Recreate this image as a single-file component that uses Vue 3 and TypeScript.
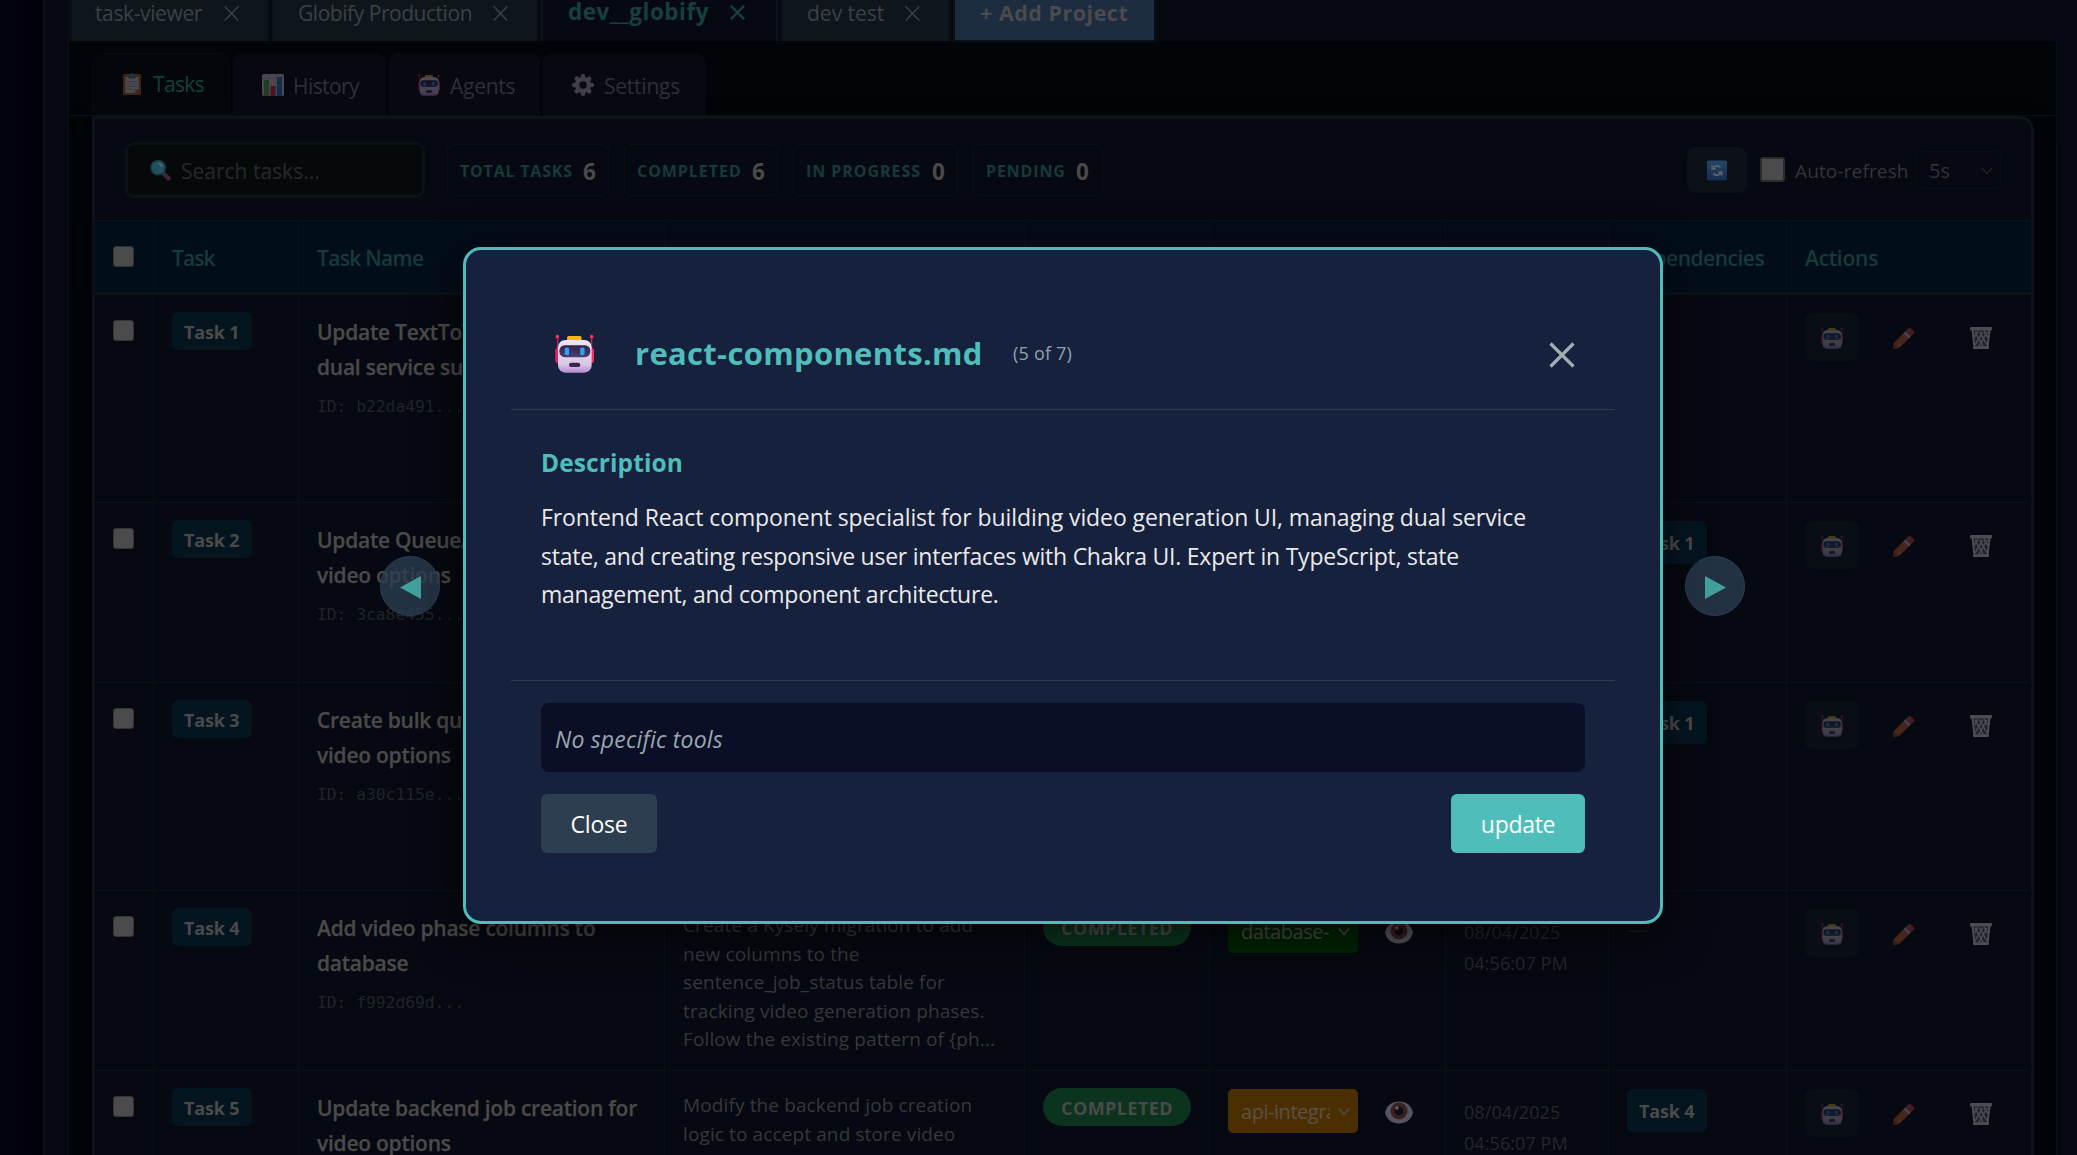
<script setup lang="ts">
interface ProjectTab { name: string; cls: string }
interface SubTab { name: string; icon: string; cls: string }
interface Stat { label: string; value: number; cls: string }
interface Task {
  id: number
  title: string[]
  uid: string
  size: string
  details?: string[]
  status?: string
  agent?: string
  agentCls?: string
  date?: string[]
  dep?: string
}

const projects: ProjectTab[] = [
  { name: 'task-viewer', cls: 'p1' },
  { name: 'Globify Production', cls: 'p2' },
  { name: 'dev__globify', cls: 'p3 active' },
  { name: 'dev test', cls: 'p4' },
]

const subTabs: SubTab[] = [
  { name: 'Tasks', icon: 'i-clipboard', cls: 's1 active' },
  { name: 'History', icon: 'i-chart', cls: 's2' },
  { name: 'Agents', icon: 'i-robot', cls: 's3' },
  { name: 'Settings', icon: 'i-gear', cls: 's4' },
]

const stats: Stat[] = [
  { label: 'TOTAL TASKS', value: 6, cls: 'w1' },
  { label: 'COMPLETED', value: 6, cls: 'w2' },
  { label: 'IN PROGRESS', value: 0, cls: 'w3' },
  { label: 'PENDING', value: 0, cls: 'w4' },
]

const tasks: Task[] = [
  { id: 1, title: ['Update TextToVideo', 'dual service support'], uid: 'b22da491', size: 'tall' },
  { id: 2, title: ['Update QueueAll', 'video options'], uid: '3ca8e455', size: 'short', dep: 'Task 1' },
  { id: 3, title: ['Create bulk queue', 'video options'], uid: 'a30c115e', size: 'tall', dep: 'Task 1' },
  {
    id: 4,
    title: ['Add video phase columns to', 'database'],
    uid: 'f992d69d',
    size: 'short',
    details: ['Create a Kysely migration to add', 'new columns to the', 'sentence_job_status table for', 'tracking video generation phases.', 'Follow the existing pattern of {ph...'],
    status: 'COMPLETED',
    agent: 'database-',
    agentCls: 'green',
    date: ['08/04/2025', '04:56:07 PM'],
    dep: '—',
  },
  {
    id: 5,
    title: ['Update backend job creation for', 'video options'],
    uid: '7be0c2d1',
    size: 'tall',
    details: ['Modify the backend job creation', 'logic to accept and store video'],
    status: 'COMPLETED',
    agent: 'api-integration',
    agentCls: 'amber',
    date: ['08/04/2025', '04:56:07 PM'],
    dep: 'Task 4',
  },
]
</script>

<template>
  <div class="app">
    <svg class="defs" width="0" height="0" aria-hidden="true">
      <defs>
        <linearGradient id="head" x1="0" y1="0" x2="0" y2="1">
          <stop offset="0" stop-color="#efe8f2" /><stop offset=".75" stop-color="#d8c6e4" /><stop offset="1" stop-color="#b58ad6" />
        </linearGradient>
        <linearGradient id="visor" x1="0" y1="0" x2="0" y2="1">
          <stop offset="0" stop-color="#35204a" /><stop offset="1" stop-color="#4a3f72" />
        </linearGradient>
        <linearGradient id="blue" x1="0" y1="0" x2="0" y2="1">
          <stop offset="0" stop-color="#4fa8f5" /><stop offset="1" stop-color="#2b62b8" />
        </linearGradient>
      </defs>
      <symbol id="i-robot" viewBox="75 74 116 118" preserveAspectRatio="none">
        <path d="M83 84V122M184 84V122" stroke="#e0285a" stroke-width="3.5" />
        <circle cx="82" cy="82" r="5.5" fill="#f8315f" /><circle cx="184" cy="82" r="5.5" fill="#f8315f" />
        <rect x="76" y="117" width="14" height="45" rx="6" fill="#e8245c" /><rect x="177" y="117" width="14" height="45" rx="6" fill="#f8315f" />
        <rect x="111" y="80" width="43" height="18" rx="5" fill="#fbb41c" />
        <rect x="84" y="92" width="100" height="99" rx="22" fill="url(#head)" />
        <rect x="88" y="108" width="92" height="36" rx="16" fill="url(#visor)" />
        <rect x="104" y="115" width="13" height="23" rx="5" fill="#2aa3f0" /><rect x="150" y="115" width="13" height="23" rx="5" fill="#2aa3f0" />
        <rect x="117" y="161" width="33" height="13" rx="5.5" fill="#3b2450" />
      </symbol>
      <symbol id="i-clipboard" viewBox="0 0 18 22">
        <rect x="0" y="1" width="18" height="21" rx="1.5" fill="#c9713a" />
        <path d="M2.5 4h13v12l-4 4h-9z" fill="#f1ecf4" /><path d="M15.500 16h-4v4z" fill="#b9a9c9" />
        <rect x="5" y="1.500" width="8" height="4" rx="1" fill="#8a7d94" /><circle cx="9" cy="1.500" r="1.500" fill="#8a7d94" />
        <path d="M4.500 8.500h9M4.500 11h9M4.500 13.500h9M4.500 16h5" stroke="#b5a8bd" stroke-width="1" />
      </symbol>
      <symbol id="i-chart" viewBox="0 0 22 22">
        <rect width="22" height="22" rx="2" fill="#e4dde8" /><path d="M0 4h22M7 0v22M14 0v22" stroke="#c2b8ca" stroke-width=".7" />
        <rect x="2" y="6" width="5" height="16" fill="#5fb84a" /><rect x="8.500" y="12" width="5" height="10" fill="#e8315c" /><rect x="15" y="3" width="5" height="19" fill="#2f87d8" />
      </symbol>
      <symbol id="i-gear" viewBox="0 0 22 22">
        <g fill="#c4bbcb">
          <rect v-for="a in 8" :key="a" x="8.800" y="0" width="4.400" height="7" rx="2" :transform="`rotate(${a * 45} 11 11)`" />
        </g>
        <circle cx="11" cy="11" r="6" fill="none" stroke="#c4bbcb" stroke-width="4" />
        <circle cx="11" cy="11" r="4" fill="none" stroke="#83798c" stroke-width="1" />
      </symbol>
      <symbol id="i-search" viewBox="0 0 22 22">
        <path d="M14.500 15l5 5" stroke="#7d4a78" stroke-width="4.500" stroke-linecap="round" />
        <circle cx="8.500" cy="8.500" r="7.500" fill="#43a8bd" stroke="#2f7189" stroke-width="1.600" /><path d="M10 4.500l2.500 2" stroke="#a8e6ee" stroke-width="2" stroke-linecap="round" />
      </symbol>
      <symbol id="i-refresh" viewBox="0 0 20 20">
        <rect width="20" height="20" rx="1.500" fill="url(#blue)" />
        <path d="M5.600 8.600A4.800 4.800 0 0 1 13.700 7M14.400 11.400A4.800 4.800 0 0 1 6.300 13" fill="none" stroke="#f1ecf4" stroke-width="2" />
        <path d="M4.400 4v5.200h5.200zM15.600 16v-5.200h-5.200z" fill="#f1ecf4" />
      </symbol>
      <symbol id="i-pencil" viewBox="0 0 22 22">
        <path d="M15.500 1.200q1.200-1.200 2.400 0l3 3q1 1.200 0 2.300l-3 3-5.400-5.400z" fill="#b8453a" />
        <path d="M12.500 4.100l5.400 5.400-2.300 2.300-5.400-5.400z" fill="#b9aeb6" />
        <path d="M10.200 6.400l5.400 5.400-9.200 9q-2.200 1.400-4.500 1.100-2-.2-1.800-2.100.1-2.300 1.300-4.400z" fill="#c4622a" />
        <path d="M1 16.500l4.800 4.600q-2.500 1.100-4.600.700-1.500-.6-1-2.200z" fill="#8e4530" />
      </symbol>
      <symbol id="i-trash" viewBox="0 0 22 22">
        <path d="M2 3h18l-2 18.500H4z" fill="#5c5562" />
        <path d="M2.500 3l2 17.500h13l2-17.500" fill="none" stroke="#d4cdd8" stroke-width="2" />
        <path d="M5 5l8.500 15M9.500 5l7.500 13M14 4l3.500 6M17 5L8.500 20M12.500 5L5 18M8 4L4.500 10" stroke="#d4cdd8" stroke-width="1.500" fill="none" />
        <rect x="0" y="0" width="22" height="3.600" rx="1" fill="#d4cdd8" /><rect x="3" y="19.500" width="16" height="2.500" rx="1" fill="#d4cdd8" />
      </symbol>
      <symbol id="i-eye" viewBox="0 0 28 22">
        <path d="M0 11C2 3.500 7 0 14 0s12 3.500 14 11c-2 7.500-7 11-14 11S2 18.500 0 11z" fill="#d9cfe0" />
        <circle cx="14" cy="9.500" r="8.500" fill="#86433f" /><circle cx="14" cy="9.500" r="4.300" fill="#25121a" /><circle cx="12" cy="6.500" r="1.700" fill="#f4f0f6" />
      </symbol>
    </svg>

    <div class="gutter"></div>
    <div class="shell">
      <nav class="projects">
        <div v-for="p in projects" :key="p.name" class="project" :class="p.cls">
          <span class="pname">{{ p.name }}</span>
          <svg class="px" viewBox="0 0 15 15"><path d="M.8.600l13.400 13.800M14.200.600L.8 14.400" /></svg>
        </div>
        <div class="add">+ Add Project</div>
      </nav>

      <main class="content">
        <div class="subtabs">
          <div v-for="s in subTabs" :key="s.name" class="subtab" :class="s.cls">
            <svg class="em"><use :href="'#' + s.icon" /></svg><span>{{ s.name }}</span>
          </div>
        </div>

        <section class="card">
          <div class="toolbar">
            <div class="search"><svg class="em"><use href="#i-search" /></svg><span>Search tasks...</span></div>
            <div class="stats">
              <div v-for="s in stats" :key="s.label" class="stat" :class="s.cls"><span class="lbl">{{ s.label }}</span><b>{{ s.value }}</b></div>
            </div>
            <div class="controls">
              <div class="refresh"><svg class="em"><use href="#i-refresh" /></svg></div>
              <i class="box big"></i>
              <span class="auto">Auto-refresh</span>
              <div class="interval"><span>5s</span><svg viewBox="0 0 12 8"><path d="M1 1l5 5.500L11 1" /></svg></div>
            </div>
          </div>

          <div class="row head">
            <div class="cell chk"><i class="box"></i></div>
            <div class="cell h1">Task</div>
            <div class="cell h2">Task Name</div>
            <div class="cell"></div>
            <div class="cell"></div>
            <div class="cell"></div>
            <div class="cell"></div>
            <div class="cell h3">Dependencies</div>
            <div class="cell h4">Actions</div>
          </div>

          <div v-for="t in tasks" :key="t.id" class="row" :class="t.size">
            <div class="cell chk"><i class="box"></i></div>
            <div class="cell"><span class="tbadge">Task {{ t.id }}</span></div>
            <div class="cell name">
              <div v-for="l in t.title" :key="l" class="line">{{ l }}</div>
              <div class="uid">ID: {{ t.uid }}...</div>
            </div>
            <div class="cell desc"><div v-for="l in t.details" :key="l">{{ l }}</div></div>
            <div class="cell"><span v-if="t.status" class="status">{{ t.status }}</span></div>
            <div class="cell agent">
              <template v-if="t.agent">
                <div class="select" :class="t.agentCls"><span>{{ t.agent }}</span><svg viewBox="0 0 12 8"><path d="M1 1l5 6 5-6" /></svg></div>
                <svg class="em eye"><use href="#i-eye" /></svg>
              </template>
            </div>
            <div class="cell date"><div v-for="l in t.date" :key="l">{{ l }}</div></div>
            <div class="cell"><span v-if="t.dep" :class="t.dep === '—' ? 'none' : 'dep'">{{ t.dep }}</span></div>
            <div class="cell actions">
              <div class="bot"><svg class="em"><use href="#i-robot" /></svg></div>
              <svg class="em pencil"><use href="#i-pencil" /></svg>
              <svg class="em trash"><use href="#i-trash" /></svg>
            </div>
          </div>
        </section>
      </main>
    </div>

    <div class="nav prev"><svg viewBox="0 0 21 23"><path d="M21 0v23L0 11.500z" /></svg></div>
    <div class="nav next"><svg viewBox="0 0 21 23"><path d="M0 0v23l21-11.500z" /></svg></div>

    <div class="modal">
      <header>
        <svg class="avatar"><use href="#i-robot" /></svg>
        <h2>react-components.md</h2>
        <span class="count">(5 of 7)</span>
        <svg class="x" viewBox="0 0 26 26"><path d="M1.500 1.500l23 23M24.500 1.500l-23 23" /></svg>
      </header>
      <div class="body">
        <h3>Description</h3>
        <p>
          <span class="l1">Frontend React component specialist for building video generation UI, managing dual service</span><br />
          <span class="l2">state, and creating responsive user interfaces with Chakra UI. Expert in TypeScript, state</span><br />
          <span class="l2">management, and component architecture.</span>
        </p>
      </div>
      <footer>
        <div class="tools">No specific tools</div>
        <div class="buttons"><button class="close">Close</button><button class="update">update</button></div>
      </footer>
    </div>
  </div>
</template>

<style>
body { background: #02020c; }
</style>

<style scoped>
* { box-sizing: border-box; }
.app { position: relative; width: 2077px; height: 1155px; overflow: hidden; display: flex; font-family: "Open Sans", "Noto Sans", sans-serif; color: #4a4a4a; background: #02020c; font-size: 21px; white-space: nowrap; }
.defs { position: absolute; }
svg { display: block; flex: none; }
.em { opacity: .3; }
.gutter { width: 43px; flex: none; background: linear-gradient(90deg, #03020f 40%, #01010a 75%, #010108); }
.shell { width: 2034px; flex: none; border-left: 2px solid #0c1117; padding-left: 23px; background: #060911; }

.projects { display: flex; height: 41px; padding-left: 1px; border-left: 1px solid #0c1117; }
.project { display: flex; height: 41px; flex: none; background: #0e161b; border: solid #0a1118; border-width: 0 2px; line-height: 26px; margin-right: 3px; color: #3d4143; }
.project .px { width: 15px; height: 15px; margin-top: 6px; fill: none; stroke: #3d4143; stroke-width: 1.400; }
.p1 { width: 199px; padding-left: 23px; }
.p1 .pname { width: 129px; letter-spacing: -.38px; }
.p2 { width: 266px; padding-left: 24px; }
.p2 .pname { width: 195px; letter-spacing: -.46px; }
.p3 { width: 237px; padding-left: 25px; }
.p3 .pname { width: 161px; letter-spacing: .500px; font-size: 22.500px; font-weight: 700; line-height: 23px; }
.p4 { width: 169px; padding-left: 24px; }
.p4 .pname { width: 98px; }
.project.active { background: #060911; color: #16403d; border-color: #0c1218; }
.project.active .px { width: 17px; margin-top: 5px; stroke: #16403d; stroke-width: 2.300; }
.add { width: 199px; height: 40px; margin-left: 2px; background: #1d2c40; outline: 2px solid #091016; color: #4a4b4c; font-weight: 700; font-size: 21.500px; letter-spacing: .500px; line-height: 26px; padding-left: 25px; }

.content { width: 1989px; height: 1114px; border: solid #0b1015; border-width: 0 1px; background: #020508; }
.subtabs { height: 75px; display: flex; align-items: flex-end; padding-left: 23px; border-bottom: 1px solid #0c1117; }
.subtab { height: 62px; display: flex; align-items: center; background: #080810; border-radius: 9px 9px 0 0; margin-right: 3px; color: #2d2f38; }
.subtab svg { width: 22px; height: 22px; margin-top: 1px; }
.subtab span { padding-top: 3px; }
.s1 { width: 138px; padding-left: 30px; letter-spacing: -.66px; background: #03060a; border: 1px solid #070b10; border-bottom: 0; color: #16403d; }
.s1 svg { width: 18px; margin: -1px 12px 0 0; }
.s1 span { padding: 0 0 2px; }
.s2 { width: 153px; padding-left: 29px; letter-spacing: -.57px; }
.s2 svg { margin-right: 9px; }
.s3 { width: 151px; padding-left: 29px; letter-spacing: -.25px; }
.s3 svg { margin-right: 10px; }
.s3 svg, .s4 svg { margin-top: 2px; }
.s4 { width: 163px; padding-left: 29px; letter-spacing: -.23px; }
.s4 svg { margin-right: 10px; }

.card { margin-left: 23px; width: 1942px; border: 3px solid #0c1218; border-bottom: 0; border-radius: 0 14px 0 0; background: #060911; box-shadow: 0 10px 22px rgba(0, 0, 0, .6); }
.toolbar { height: 102px; border-bottom: 1px solid #0c1117; display: flex; align-items: center; padding-left: 30px; }
.search { width: 300px; height: 56px; border: 3px solid #0c1117; border-radius: 9px; background: #06090a; display: flex; align-items: center; padding: 3px 0 0 22px; color: #26292a; }
.search svg { width: 21px; height: 22px; margin: -2px 10px 0 0; opacity: .45; }
.stats { display: flex; gap: 15px; margin-left: 22px; }
.stat { height: 52px; border: 1px solid #0b1016; border-radius: 6px; display: flex; align-items: center; padding: 2px 0 0 12px; }
.lbl { font-size: 16px; font-weight: 700; color: #163b39; }
.stat b { font-size: 22.500px; color: #4a4a4a; margin-top: 1px; }
.w1 { width: 162px; } .w1 .lbl { width: 123px; letter-spacing: .8px; }
.w2 { width: 154px; } .w2 .lbl { width: 115px; letter-spacing: .95px; }
.w3 { width: 165px; } .w3 .lbl { width: 126px; letter-spacing: .95px; }
.w4 { width: 130px; } .w4 .lbl { width: 90px; letter-spacing: .85px; }
.controls { margin-left: auto; display: flex; align-items: center; padding-right: 30px; }
.refresh { width: 60px; height: 46px; border-radius: 9px; background: #0c1118; display: flex; align-items: center; justify-content: center; margin-right: 13px; }
.refresh svg { width: 20px; height: 21px; margin-top: 2px; opacity: .35; }
.box { display: block; width: 21px; height: 21px; border-radius: 3px; background: #4b4b4b; border: 1px solid #333; flex: none; }
.box.big { width: 25px; height: 25px; border: 2px solid #2c2c2c; margin-right: 10px; }
.auto { font-size: 19px; letter-spacing: .14px; width: 121px; padding-top: 2px; color: #333537; }
.interval { width: 85px; height: 38px; border: 1px solid #0b1016; border-radius: 6px; display: flex; align-items: center; padding: 2px 0 0 12px; font-size: 20px; color: #303234; }
.interval svg { width: 12px; height: 8px; margin-left: 31px; fill: none; stroke: #1d2022; stroke-width: 1.500; }

.row { display: grid; grid-template-columns: 59px 145px 366px 360px 185px 236px 163px 178px 244px; border-bottom: 1px solid #0b1016; }
.tall { height: 208px; }
.short { height: 180px; }
.cell { border-right: 1px solid #0b1016; padding-left: 18px; overflow: hidden; }
.cell:last-child { border-right: 0; }
.head { height: 74px; background: #020d1a; border-bottom: 3px solid #0b1218; color: #153b3c; font-weight: 600; line-height: 75px; }
.h1 { letter-spacing: -.9px; } .h2 { letter-spacing: -.68px; } .h3 { letter-spacing: -.5px; } .h4 { letter-spacing: -.25px; }
.chk { padding-top: 25px; }
.tbadge { display: block; width: 80px; height: 38px; margin-top: 17px; border-radius: 6px; background: #051520; font-size: 18px; font-weight: 700; line-height: 40px; padding-left: 12px; letter-spacing: -.15px; }
.name { padding-top: 20px; }
.line { height: 35px; line-height: 35px; font-weight: 600; letter-spacing: -.25px; -webkit-text-stroke: .25px; }
.uid { margin-top: 10px; font-family: "DejaVu Sans Mono", monospace; font-size: 16.300px; line-height: 24px; color: #202426; }
.desc { padding-top: 20px; font-size: 19px; line-height: 28.500px; letter-spacing: .12px; color: #36383b; }
.status { display: block; width: 148px; height: 38px; margin-top: 17px; border-radius: 19px; background: #0c331d; font-size: 18px; font-weight: 700; line-height: 40px; text-align: center; letter-spacing: .43px; }
.agent { display: flex; }
.select { width: 130px; height: 44px; margin-top: 18px; border-radius: 5px; display: flex; align-items: center; padding-left: 13px; font-size: 20px; letter-spacing: -.46px; color: #4a4b48; }
.select span { width: 89px; overflow: hidden; padding-top: 0; }
.select svg { width: 12px; height: 9px; margin-left: 8px; fill: none; stroke: #4a4b48; stroke-width: 1.700; }
.green { background: #002300; }
.amber { background: #4c2f00; color: #5a5148; }
.eye { width: 28px; height: 23px; margin: 30px 0 0 27px; opacity: .38; }
.date { padding-top: 26px; font-size: 18px; line-height: 30.500px; letter-spacing: .08px; color: #242729; }
.dep { display: block; width: 80px; height: 43px; margin-top: 18px; border-radius: 6px; background: #051520; font-size: 18px; font-weight: 700; line-height: 45px; padding-left: 12px; letter-spacing: -.15px; }
.none { display: block; line-height: 30px; margin-top: 22px; font-size: 22px; color: #191c1e; }
.actions { display: flex; }
.bot { width: 54px; height: 48px; margin-top: 18px; border-radius: 7px; background: #090e14; padding: 14px 0 0 16px; }
.bot svg { width: 22px; height: 22px; opacity: .26; }
.pencil { width: 22px; height: 22px; margin: 32px 0 0 34px; opacity: .34; }
.trash { width: 22px; height: 22px; margin: 32px 0 0 55px; opacity: .34; }

.nav { position: absolute; top: 556px; width: 60px; height: 60px; border-radius: 50%; background: rgba(42, 61, 80, .8); border: 1px solid #2a3f55; }
.nav svg { width: 21px; height: 23px; margin-top: 19px; fill: #42a09f; }
.prev { left: 380px; } .prev svg { margin-left: 19px; }
.next { left: 1685px; } .next svg { margin-left: 19px; }

.modal { position: absolute; left: 463px; top: 247px; width: 1200px; height: 677px; border: 3px solid #4fbdba; border-radius: 18px; background: #16213e; padding: 45px; box-shadow: 0 10px 45px rgba(0, 0, 0, .6); }
header { height: 115px; border-bottom: 1px solid #303c50; display: flex; align-items: center; padding: 2px 40px 0 44px; }
.avatar { width: 39px; height: 39px; margin: 1px 41px 0 0; }
h2 { margin: 0; width: 378px; color: #4fbdba; font-size: 31px; line-height: 40px; font-weight: 700; letter-spacing: .32px; }
.count { font-size: 18px; letter-spacing: .2px; color: #95a0a8; }
.x { width: 26px; height: 26px; margin: 4px 0 0 auto; fill: none; stroke: #a3adb0; stroke-width: 3.200; }
.body { height: 270px; padding: 38px 30px 0; }
h3 { margin: 0; font-size: 24.500px; line-height: 30px; color: #4fbdba; letter-spacing: .1px; }
p { margin: 20px 0 0; font-size: 23px; line-height: 38.500px; color: #eaeaea; }
.l1 { letter-spacing: -.09px; }
.l2 { letter-spacing: -.24px; }
footer { border-top: 1px solid #2d3d50; padding: 22px 30px 0; }
.tools { height: 69px; border-radius: 8px; background: #0a0e27; color: #9aa8ad; font-style: italic; font-size: 23px; line-height: 73px; padding-left: 14px; letter-spacing: .2px; }
.buttons { margin-top: 22px; display: flex; justify-content: space-between; }
button { height: 59px; border: 0; border-radius: 6px; font: 400 23px/58px "Open Sans", sans-serif; color: #fff; padding: 0; }
.close { width: 116px; background: #2c3e50; letter-spacing: -.2px; }
.update { width: 134px; background: #4fbdba; letter-spacing: -.3px; }
</style>
